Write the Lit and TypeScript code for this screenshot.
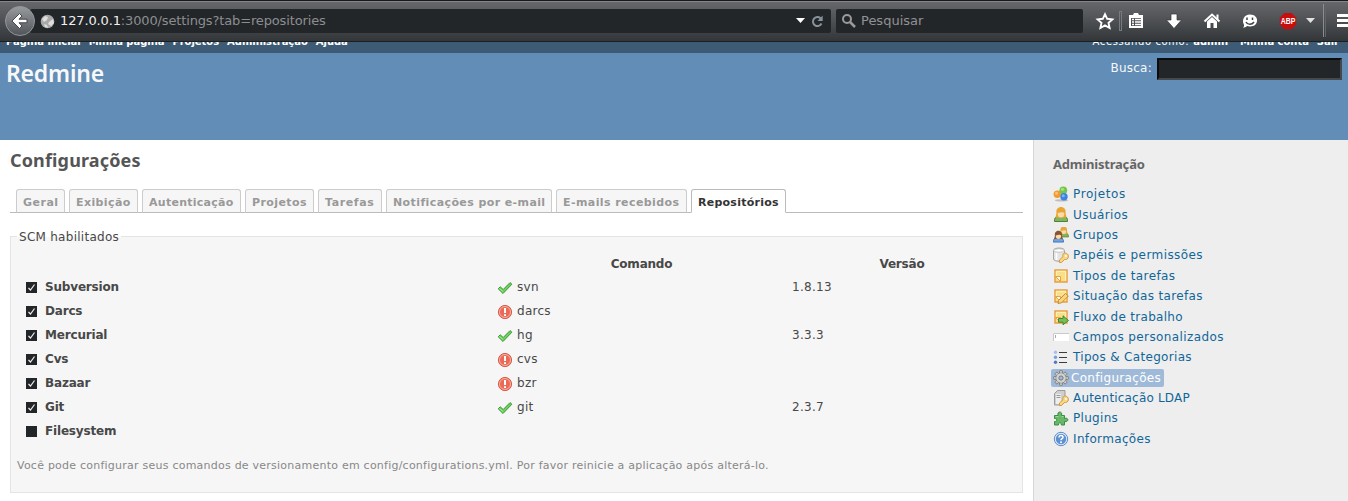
import { LitElement, html, svg, css } from "lit";
import { customElement } from "lit/decorators.js";
import { classMap } from "lit/directives/class-map.js";
import { styleMap } from "lit/directives/style-map.js";

const person = (hair: string, body: string, edge: string) => svg`
  <path d="M1.500 14.500c-.6-3 1.400-5 3.500-5.500h6c2.100.5 4.100 2.500 3.500 5.500z" fill="${body}" stroke="${edge}"/>
  <path d="M3.500 6c-1.500-8 10.500-8 9 0l1 4.500h-11z" fill="${hair}"/>
  <ellipse cx="8" cy="6.900" rx="3.300" ry="3.500" fill="#fbd9a8"/>
  <path d="M4.200 6C4 1.500 12 1.500 11.800 6 10 4.500 8 5.500 4.200 6z" fill="${hair}"/>`;
const note = svg`
  <rect x="2" y="2" width="12" height="12" fill="#fbdf88" stroke="#e8993a" stroke-width="1.400"/>
  <path d="M3.300 8v-4.700h9.400v9.400" fill="none" stroke="#fff3c4"/>
  <path d="M2.500 8.500h5v5z" fill="#fffbea" stroke="#e39a35" stroke-width=".9"/>`;
const key = svg`
  <path d="M10.500 6.500c3-1.500 6 1.500 4.500 4.500-1 1.700-2.600 1.800-3.500 1.500l-3 3H6.500V13l3.500-3.300c-.4-1.200-.2-2.300.5-3.200z" fill="#f9d680" stroke="#d09436" stroke-width=".9"/>
  <circle cx="12.900" cy="8.900" r="1" fill="#fff"/>`;

const icons: Record<string, unknown> = {
  projects: svg`<ellipse cx="8.500" cy="14.400" rx="6.500" ry="1.100" fill="#bdbdbd"/>
    <circle cx="4.300" cy="8.300" r="3.700" fill="#f49a32"/><circle cx="3.500" cy="7.300" r="1.500" fill="#ffc078"/>
    <circle cx="10.300" cy="4.300" r="3.900" fill="#74c648"/><circle cx="9.500" cy="3.300" r="1.600" fill="#a5e27f"/>
    <circle cx="11" cy="10.800" r="3.700" fill="#3a83e0"/><circle cx="10.300" cy="9.800" r="1.500" fill="#7fb5f7"/>`,
  user: svg`${person("#e9a534", "#83b65c", "#4e8235")}`,
  group: svg`<g transform="translate(5 -.5) scale(.72)">${person("#e5a83a", "#83b65c", "#4e8235")}</g>
    <g transform="translate(-.8 3.800) scale(.78)">${person("#8a5433", "#6ba3e6", "#2f65b5")}</g>`,
  roles: svg`<path d="M.5 3.500c0-3.300 11-3.300 11 0v8.500c0 3-11 3-11 0z" fill="#e4e4e4" stroke="#a5a5a5"/>
    <ellipse cx="6" cy="3.500" rx="5" ry="1.800" fill="#fafafa" stroke="#b5b5b5" stroke-width=".7"/>
    <path d="M3.500 6v7" stroke="#fff" stroke-width="1.700"/>${key}`,
  note,
  noteEdit: svg`${note}<path d="M5.500 12.500L12.500 5.500 15.300 8 8.500 14.800l-3.500.7z" fill="#f7d47e" stroke="#c08327" stroke-width=".9"/>`,
  noteGo: svg`${note}<path d="M5.500 9.500h4.500V6.800l5.500 4.700-5.500 4.300V13.200H5.500z" fill="#75c052" stroke="#3b7f2c" stroke-width=".9"/>`,
  field: svg`<rect x="0" y="4" width="16" height="8" fill="#fff"/><path d="M.5 12V4.500H16" fill="none" stroke="#c9c9c9"/><path d="M2.500 6v3" stroke="#aaa"/>`,
  list: svg`<path d="M6 3.500h8M6 8.500h8M6 13.500h8" stroke="#3c3c3c"/>
    <circle cx="2.500" cy="3.300" r="1.700" fill="#a5c0ee"/><circle cx="2.500" cy="8.300" r="1.700" fill="#759ddf"/><circle cx="2.500" cy="13.300" r="1.700" fill="#4f79c8"/>`,
  gear: svg`<g fill="#c8c8c8" stroke="#777" stroke-width=".9">${[0, 45, 90, 135].map((a) => svg`<rect x="6.500" y=".6" width="3" height="14.800" rx=".8" transform="rotate(${a} 8 8)"/>`)}</g>
    <circle cx="8" cy="8" r="5" fill="#cfcfcf" stroke="#858585" stroke-width=".8"/>
    <circle cx="8" cy="8" r="4.500" fill="#d2d2d2"/>
    <circle cx="8" cy="8" r="2.100" fill="#9fbad8" stroke="#777"/>`,
  server: svg`<path d="M1.500 3.500l3-3H12V12l-3 3H1.500z" fill="#cfcfcf" stroke="#9b9b9b"/><path d="M3 4h5v10H3z" fill="#eee"/><path d="M3.500 5.500h4M3.500 7.500h4" stroke="#999"/>${key}`,
  plugin: svg`<path d="M1.500 5.500h3.600C3.500 .8 10 .8 8.500 5.500h3v3c4.500-1.500 4.500 4 0 3v3.500H8.300c.5-3-3.300-3-2.800 0h-4v-3.500c3 .5 3-3.500 0-3z" fill="#67b867" stroke="#3c8b45"/>
    <path d="M2.500 6.500h3m3 0h2" stroke="#9bdb96"/>`,
  info: svg`<circle cx="8" cy="8" r="6.700" fill="#dfeafa" stroke="#5f8bc9"/><circle cx="8" cy="8" r="5.200" fill="#5f90d0"/>
    <path d="M6 6.600c0-3 4-2.600 4-.4 0 1.500-2 1.500-2 3" fill="none" stroke="#fff" stroke-width="1.500"/><circle cx="8" cy="11.200" r="1" fill="#fff"/>`,
  ok: svg`<path d="M1.200 8.800l2-2 3 2.700L13 2.600l1.900 1.600L6 13.500z" fill="#6fcf5e" stroke="#3c9b38"/><path d="M2.500 8.500L6 11.500" stroke="#a4eb92"/>`,
  bad: svg`<circle cx="8" cy="8" r="6.600" fill="#ea6a55" stroke="#d95c4b"/><circle cx="8" cy="8" r="5.500" fill="none" stroke="#f9c4b8" stroke-width=".8"/>
    <path d="M8 4v5" stroke="#fff" stroke-width="2"/><path d="M8 10.300v1.700" stroke="#fff" stroke-width="2"/>`,
};
const icon = (name: string) => html`<svg class="icon" viewBox="0 0 16 16">${icons[name]}</svg>`;
const tracked = (text: string, spacing: number) =>
  html`<span style=${styleMap({ letterSpacing: `${spacing}px` })}>${text}</span>`;

const TABS: [string, string, number][] = [
  ["Geral", "t1", 0.5], ["Exibição", "t2", 0.4], ["Autenticação", "t3", 0.27], ["Projetos", "t4", 0.42],
  ["Tarefas", "t5", 0.6], ["Notificações por e-mail", "t6", 0.4], ["E-mails recebidos", "t7", 0.42], ["Repositórios", "t8", 0.25],
];
const SCMS: [string, string, boolean | null, string][] = [
  ["Subversion", "svn", true, "1.8.13"], ["Darcs", "darcs", false, ""], ["Mercurial", "hg", true, "3.3.3"],
  ["Cvs", "cvs", false, ""], ["Bazaar", "bzr", false, ""], ["Git", "git", true, "2.3.7"], ["Filesystem", "", null, ""],
];
const MENU: [string, string, number][] = [
  ["projects", "Projetos", 0.6], ["user", "Usuários", 0.42], ["group", "Grupos", 0.4], ["roles", "Papéis e permissões", 0.43],
  ["note", "Tipos de tarefas", 0.4], ["noteEdit", "Situação das tarefas", 0.36], ["noteGo", "Fluxo de trabalho", 0.3],
  ["field", "Campos personalizados", 0.4], ["list", "Tipos & Categorias", 0.32], ["gear", "Configurações", 0.32],
  ["server", "Autenticação LDAP", 0.18], ["plugin", "Plugins", 0.3], ["info", "Informações", 0.35],
];

@customElement("browser-bar")
class BrowserBar extends LitElement {
  static styles = css`
    :host { display: block; height: 42px; box-sizing: border-box; border-bottom: 1px solid #1c1f21; overflow: hidden;
      background: linear-gradient(#17181b 0 1px, #85868a 1px 2px, #66676b 2px, #54565a 16px, #323639 41px); font: 13px/24px "DejaVu Sans", sans-serif; }
    .row { display: flex; align-items: flex-start; }
    .back { flex: none; width: 32px; height: 32px; margin: 5px 0 0 4px; z-index: 1; }
    .url { display: flex; align-items: center; box-sizing: border-box; width: 801px; height: 24px; margin: 9px 0 0 -6px; background: #232629; padding-left: 10px; color: #8c8e90; border-radius: 2px; }
    .addr { margin-left: 5px; flex: 1; white-space: pre; letter-spacing: -.14px; }
    .host { color: #eff0f1; }
    .search { display: flex; align-items: center; box-sizing: border-box; width: 247px; height: 24px; margin: 9px 0 0 5px; padding-left: 5px; background: #232629; color: #909294; border-radius: 2px; }
    .search span { margin-left: 4px; }
    .tools { flex: none; width: 265px; height: 41px; }
    .abp { font: bold 9px "Liberation Sans", sans-serif; }
  `;
  render() {
    return html`<div class="row">
      <svg class="back" viewBox="0 0 32 32"><defs><linearGradient id="g" x2="0" y2="1"><stop stop-color="#999b9e"/><stop offset="1" stop-color="#505459"/></linearGradient></defs>
        <circle cx="16" cy="16" r="14.500" fill="url(#g)" stroke="#92979c"/>
        <path d="M8 16l7.500-7.500 2.500 2.500-3 3.200h8v3.600h-8l3 3.200-2.500 2.500z" fill="#fff" stroke="#44484c"/></svg>
      <div class="url">
        <svg width="15" height="15" viewBox="0 0 15 15"><circle cx="7.500" cy="7.500" r="6.800" fill="#a9a9a9"/><path d="M2 5l3-3 3 1-1 3-3 2zM9 8l4-3 1 4-3 3-3-2zM4 10l3 1 1 3-3-1z" fill="#dedede"/></svg>
        <span class="addr"><span class="host">127.0.0.1</span>:3000/settings?tab=repositories</span>
        <svg width="39" height="24" viewBox="0 0 39 24"><path d="M4 9h9l-4.500 5z" fill="#fff"/><path d="M28.500 9.200A4.500 4.500 0 1 0 29.500 14.500" fill="none" stroke="#87929c" stroke-width="2"/><path d="M25.500 12h5.200V6.500z" fill="#87929c"/></svg>
      </div>
      <div class="search"><svg width="16" height="16" viewBox="0 0 16 16"><circle cx="6" cy="6" r="4" fill="none" stroke="#9a9a9a" stroke-width="2"/><path d="M9 9l5 5" stroke="#9a9a9a" stroke-width="2.500"/></svg><span>Pesquisar</span></div>
      <svg class="tools" viewBox="1083 0 265 41">
        <path d="M1105 14.200l2.200 4.600 5.200.6-3.900 3.500 1.100 5.100-4.600-2.600-4.600 2.600 1.100-5.100-3.900-3.500 5.200-.6z" fill="none" stroke="#fff" stroke-width="1.900"/>
        <rect x="1119.500" y="11.500" width="2" height="19" fill="none" stroke="#777a7e"/>
        <path d="M1129 15h4l1-2h4l1 2h4v13h-14zM1131 18v8h10v-8z" fill="#fff" fill-rule="evenodd"/>
        <path d="M1132 19.500h2m1 0h6m-9 2.500h2m1 0h6m-9 2.500h2m1 0h6" stroke="#fff" stroke-width="1.500"/>
        <path d="M1171 14h6v6h4.500l-7.500 8.500-7.500-8.500h4.500z" fill="#fff" stroke="#33373a" stroke-width=".7"/>
        <path d="M1204.500 21.500l7.500-7 7.500 7" fill="none" stroke="#fff" stroke-width="2"/><path d="M1216.500 14.500h2v5h-2z" fill="#fff"/><path d="M1207 21.500l5-4.500 5 4.500V28h-3.500v-5h-3v5h-3.500z" fill="#fff"/>
        <path d="M1250 14.500c9.500 0 9.500 12 0 12-1.200 0-2-.2-3-.5-1 1-2.500 1.700-4 1.700 1-1 1.200-1.800 1-3-2.500-4.500 0-10.200 6-10.200z" fill="#fff"/>
        <path d="M1247 17.500v2.500m5.500-2.500v2.500m-6.500 2c1.500 3 6 3 8 0" stroke="#3c4043" stroke-width="1.500" fill="none"/>
        <path d="M1284.500 13h7l4.700 4.700v6.800l-4.700 4.700h-7l-4.700-4.700v-6.800z" fill="#c70d0d"/>
        <text class="abp" x="1280.700" y="24.300" textLength="14.600" lengthAdjust="spacingAndGlyphs" fill="#fff">ABP</text>
        <path d="M1306 18h9l-4.500 5z" fill="#e2e2e2"/>
        <path d="M1323.500 4v33" stroke="#8a8c90"/><path d="M1325.500 4v33" stroke="#606468"/>
        <path d="M1337 15.500h11m-11 5h11m-11 5h11" stroke="#fff" stroke-width="3"/>
      </svg></div>`;
  }
}

@customElement("app-root")
class AppRoot extends LitElement {
  static styles = css`
    :host { display: block; height: 501px; overflow: hidden; background: #fff; color: #484848; font: 12px/18px "DejaVu Sans", sans-serif; }
    .icon { width: 16px; height: 16px; flex: none; }
    .top { display: flex; justify-content: space-between; height: 11px; overflow: hidden; background: #3e5b76; color: #fff; padding: 0 9px 0 6px; font-size: 10px; line-height: 14px; white-space: nowrap; }
    .links { display: flex; gap: 8px; font-weight: bold; margin-top: -7px; height: 14px; letter-spacing: -.04px; }
    .links .plain { font-weight: normal; margin-right: -4px; letter-spacing: .6px; }
    .links .gap { margin-left: 4px; }
    .head { display: flex; justify-content: space-between; box-sizing: border-box; height: 87px; padding: 4px 6px; background: #628db6; color: #f8f8f8; }
    .brand { margin: -1px 0 0; font: 600 23px/34px "Noto Sans", sans-serif; letter-spacing: -.2px; }
    .find { display: flex; gap: 5px; line-height: 22px; letter-spacing: .25px; }
    .box { box-sizing: border-box; width: 185px; height: 22px; margin-top: 1px; background: #232629; border: 2px solid; border-color: #0c0c0c #45494d #45494d #0c0c0c; }
    .main { display: flex; height: 361px; background: #eee; }
    .content { box-sizing: border-box; width: 1034px; padding: 8px 10px; background: #fff; border-right: 1px solid #d7d7d7; }
    h2 { margin: 0; font: bold 18px/24px "Noto Sans", sans-serif; color: #555; letter-spacing: .15px; }
    .tabs { display: flex; gap: 4px; height: 24px; margin-top: 17px; padding-left: 6px; background: linear-gradient(#bbb, #bbb) 0 100% / 100% 1px no-repeat; }
    .tab { box-sizing: border-box; flex: none; height: 24px; padding-left: 6px; border: 1px solid #ccc; border-bottom-color: #bbb; border-radius: 3px 3px 0 0; background: #f6f6f6; color: #999; font-weight: bold; font-size: 11px; line-height: 25px; white-space: nowrap; }
    .on { background: #fff; color: #333; border-color: #bbb; border-bottom-color: #fff; }
    .t1 { width: 49px; } .t2 { width: 69px; } .t3 { width: 99px; } .t4 { width: 69px; }
    .t5 { width: 64px; } .t6 { width: 166px; } .t7 { width: 131px; } .t8 { width: 95px; }
    .group { box-sizing: border-box; width: 1013px; height: 257px; margin-top: 23px; border: 1px solid #e4e4e4; background: #f6f6f6; padding: 0 6px; }
    .legend { display: block; width: max-content; height: 16px; line-height: 16px; margin-top: -8px; padding: 0 2px; letter-spacing: .27px; background: linear-gradient(#fff 8px, #f6f6f6 8px); }
    .row { display: grid; grid-template-columns: 480px 295px 1fr; height: 24px; line-height: 22px; letter-spacing: .27px; }
    .th { font-weight: bold; margin-top: 8px; height: 23px; letter-spacing: -.2px; }
    .th .c { width: 289px; text-align: center; } .th .v { width: 220px; text-align: center; }
    .cell { display: flex; }
    .name { font-weight: bold; padding-left: 9px; letter-spacing: -.18px; }
    .check { width: 11px; height: 11px; margin: 6px 8px 0 0; background: #232629; }
    .cell .icon { margin: 4px 4px 0 0; }
    .note { margin: 13px 0 0; font-size: 11px; color: #888; white-space: nowrap; letter-spacing: .235px; }
    .side { padding: 15px 0 0 19px; }
    h3 { margin: 0 0 11px; font: bold 13px/18px "Noto Sans", sans-serif; color: #666; letter-spacing: -.2px; }
    .item { display: flex; align-items: center; width: max-content; height: 20.400px; color: #169; white-space: nowrap; gap: 4px; }
    .sel { height: 18px; margin: 1.200px 0 1.200px -2px; padding: 0 3px 0 2px; gap: 2px; color: #fff; background: #9fbad8; border-radius: 2px; }
  `;
  render() {
    return html`
      <browser-bar></browser-bar>
      <div class="top">
        <div class="links"><span>Página inicial</span><span>Minha página</span><span>Projetos</span><span>Administração</span><span>Ajuda</span></div>
        <div class="links"><span class="plain">Acessando como:</span><span>admin</span><span class="gap">Minha conta</span><span>Sair</span></div>
      </div>
      <div class="head"><h1 class="brand">Redmine</h1><div class="find"><span>Busca:</span><div class="box"></div></div></div>
      <div class="main">
        <div class="content">
          <h2>Configurações</h2>
          <div class="tabs">${TABS.map(([t, c, s]) => html`<div class=${classMap({ tab: true, [c]: true, on: c === "t8" })}>${tracked(t, s)}</div>`)}</div>
          <div class="group"><span class="legend">SCM habilitados</span>
            <div class="row th"><span></span><span class="c">Comando</span><span class="v">Versão</span></div>
            ${SCMS.map(([n, cmd, ok, v]) => html`<div class="row">
              <div class="cell name"><svg class="check" viewBox="0 0 11 11">${ok === null ? "" : svg`<path d="M2.500 6l2 2 4-5.500" fill="none" stroke="#eee" stroke-width="1.200"/>`}</svg><span>${n}</span></div>
              <div class="cell">${ok === null ? "" : icon(ok ? "ok" : "bad")}<span>${cmd}</span></div><span>${v}</span></div>`)}
            <p class="note">Você pode configurar seus comandos de versionamento em config/configurations.yml. Por favor reinicie a aplicação após alterá-lo.</p>
          </div>
        </div>
        <div class="side"><h3>Administração</h3>
          ${MENU.map(([i, t, s]) => html`<div class=${classMap({ item: true, sel: i === "gear" })}>${icon(i)}${tracked(t, s)}</div>`)}
        </div>
      </div>`;
  }
}
